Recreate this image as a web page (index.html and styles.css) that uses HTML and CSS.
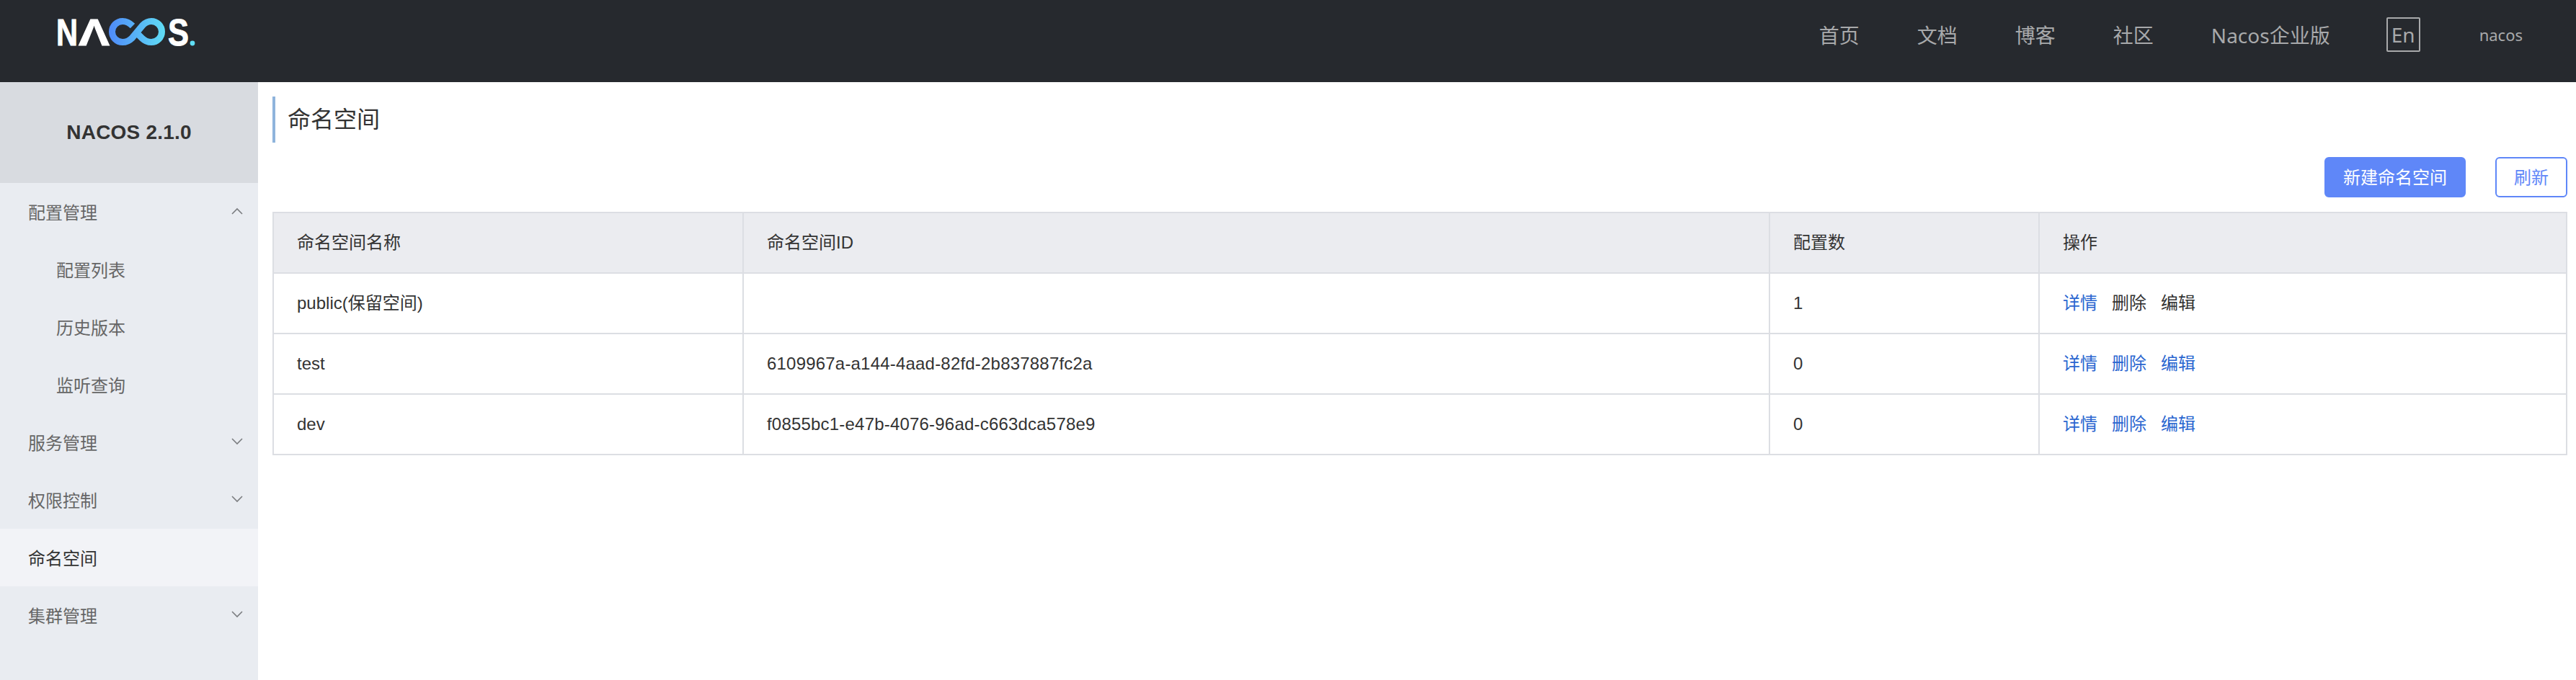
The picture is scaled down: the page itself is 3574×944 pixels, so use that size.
FILE: index.html
```html
<!DOCTYPE html>
<html lang="zh-CN">
<head>
<meta charset="utf-8">
<title>Nacos</title>
<link rel="stylesheet" href="styles.css">
</head>
<body>
<header class="topbar">
  <svg class="logo" viewBox="0 -12 196 62" width="196" height="62" role="img" aria-label="NACOS">
    <defs>
      <linearGradient id="inf" gradientUnits="userSpaceOnUse" x1="74" y1="19" x2="152" y2="19">
        <stop offset="0" stop-color="#4f8bf8"/>
        <stop offset="1" stop-color="#60def5"/>
      </linearGradient>
    </defs>
    <text class="logo-letter" x="0" y="37.5" textLength="30" lengthAdjust="spacingAndGlyphs">N</text>
    <text class="logo-letter" x="31" y="37.5" textLength="43" lengthAdjust="spacingAndGlyphs">Λ</text>
    <path class="logo-inf" stroke="url(#inf)" d="M106 11C102 7 97 4.5 92 4.5A14.5 14.5 0 0 0 92 33.5C97 33.5 102 31 105 28L120 10C123 7 127 4.5 132 4.5A14.5 14.5 0 0 1 132 33.5C127 33.5 122 31 119 28L110 19"/>
    <text class="logo-letter" x="155" y="37.5" textLength="29" lengthAdjust="spacingAndGlyphs">S</text>
    <circle class="logo-dot" cx="189" cy="35" r="3.4"/>
  </svg>
  <nav class="topnav">
    <a class="topnav-link">首页</a>
    <a class="topnav-link">文档</a>
    <a class="topnav-link">博客</a>
    <a class="topnav-link">社区</a>
    <a class="topnav-link">Nacos企业版</a>
  </nav>
  <span class="lang">En</span>
  <span class="user">nacos</span>
</header>
<div class="shell">
  <aside class="sidebar">
    <div class="version">NACOS 2.1.0</div>
    <ul class="menu">
      <li class="menu-item">配置管理<svg class="chev" viewBox="0 0 16 10" width="16" height="10"><polyline points="1,9 8,2 15,9"/></svg></li>
      <li class="menu-item sub">配置列表</li>
      <li class="menu-item sub">历史版本</li>
      <li class="menu-item sub">监听查询</li>
      <li class="menu-item">服务管理<svg class="chev" viewBox="0 0 16 10" width="16" height="10"><polyline points="1,1 8,8 15,1"/></svg></li>
      <li class="menu-item">权限控制<svg class="chev" viewBox="0 0 16 10" width="16" height="10"><polyline points="1,1 8,8 15,1"/></svg></li>
      <li class="menu-item active">命名空间</li>
      <li class="menu-item">集群管理<svg class="chev" viewBox="0 0 16 10" width="16" height="10"><polyline points="1,1 8,8 15,1"/></svg></li>
    </ul>
  </aside>
  <main class="main">
    <h1 class="page-title">命名空间</h1>
    <div class="toolbar">
      <button class="btn btn-primary">新建命名空间</button>
      <button class="btn btn-outline">刷新</button>
    </div>
    <table class="grid">
      <colgroup>
        <col class="col-name"><col class="col-id"><col class="col-count"><col class="col-ops">
      </colgroup>
      <thead>
        <tr><th>命名空间名称</th><th>命名空间ID</th><th>配置数</th><th>操作</th></tr>
      </thead>
      <tbody>
        <tr>
          <td>public(保留空间)</td><td></td><td>1</td>
          <td><div class="ops"><a class="link">详情</a><a class="plain">删除</a><a class="plain">编辑</a></div></td>
        </tr>
        <tr>
          <td>test</td><td class="uuid">6109967a-a144-4aad-82fd-2b837887fc2a</td><td>0</td>
          <td><div class="ops"><a class="link">详情</a><a class="link">删除</a><a class="link">编辑</a></div></td>
        </tr>
        <tr>
          <td>dev</td><td class="uuid">f0855bc1-e47b-4076-96ad-c663dca578e9</td><td>0</td>
          <td><div class="ops"><a class="link">详情</a><a class="link">删除</a><a class="link">编辑</a></div></td>
        </tr>
      </tbody>
    </table>
  </main>
</div>
</body>
</html>
```
FILE: styles.css
```css
* { box-sizing: border-box; }
html, body { margin: 0; padding: 0; height: 100%; overflow: hidden; }
body {
  font-family: "Liberation Sans", "Noto Sans CJK SC", sans-serif;
  font-size: 24px;
  color: #333;
  background: #fff;
  display: flex;
  flex-direction: column;
}

.topbar {
  height: 114px;
  flex: none;
  background: #26292e;
  display: flex;
  align-items: flex-start;
  padding-left: 78px;
  font-family: "Noto Sans", "Noto Sans CJK SC", sans-serif;
  color: #a8a9ab;
}
.logo { margin-top: 13px; flex: none; }
.logo-letter { font-family: "Liberation Sans", sans-serif; font-weight: 700; font-size: 52px; fill: #fff; stroke: #fff; stroke-width: 1; }
.logo-inf { fill: none; stroke-width: 9; stroke-linecap: butt; stroke-linejoin: round; }
.logo-dot { fill: #60def5; }
.topnav { margin-left: auto; display: flex; gap: 80px; height: 48px; margin-top: 24px; align-items: center; font-size: 28px; }
.lang {
  margin-left: 78px;
  margin-top: 24px;
  width: 47px;
  height: 48px;
  border: 2px solid #a8a9ab;
  border-radius: 2px;
  font-size: 28px;
  line-height: 44px;
  text-align: center;
}
.user { margin-left: 82px; margin-right: 74px; margin-top: 24px; height: 48px; line-height: 48px; font-size: 22px; }

.shell { flex: 1; display: flex; min-height: 0; }
.sidebar { width: 358px; flex: none; background: #e9ecf1; }
.version {
  height: 140px;
  background: #d8dbe0;
  display: flex;
  align-items: center;
  justify-content: center;
  font-size: 28px;
  font-weight: 700;
  letter-spacing: 0.2px;
  color: #333;
}
.menu { list-style: none; margin: 0; padding: 0; }
.menu-item {
  height: 80px;
  display: flex;
  align-items: center;
  justify-content: space-between;
  padding: 0 21px 2px 39px;
  color: #666;
  font-family: "Noto Sans CJK SC", sans-serif;
}
.menu-item.sub { padding-left: 78px; }
.menu-item.active { background: #f2f3f7; color: #333; }
.chev { flex: none; }
.chev polyline { fill: none; stroke: #7b7d80; stroke-width: 1.6; }

.main { flex: 1; min-width: 0; padding: 20px 12px 0 20px; }
.page-title {
  margin: 0;
  height: 64px;
  border-left: 4px solid #8fb4dc;
  padding-left: 17px;
  font-size: 32px;
  font-weight: 400;
  line-height: 58px;
  color: #333;
  font-family: "Noto Sans CJK SC", sans-serif;
}
.toolbar { display: flex; justify-content: flex-end; gap: 41px; margin: 20px 0; }
.btn {
  height: 56px;
  padding: 0 24px 2px;
  border-radius: 6px;
  font: inherit;
  font-family: "Noto Sans CJK SC", sans-serif;
  line-height: 1;
}
.btn-primary { background: #5f87f8; border: 2px solid #5f87f8; color: #fff; }
.btn-outline { background: #fff; border: 2px solid #5f87f8; color: #5f87f8; }

.grid { width: 3182px; border-collapse: collapse; table-layout: fixed; }
.col-name { width: 652px; }
.col-id { width: 1424px; }
.col-count { width: 374px; }
.col-ops { width: 732px; }
.grid th, .grid td {
  border: 2px solid #dcdee3;
  padding: 0 32px;
  text-align: left;
  font-weight: 400;
  line-height: 28px;
}
.grid th { height: 84px; background: #ebecf0; }
.grid td { height: 84px; }
.uuid { letter-spacing: 0.2px; }
.ops { display: flex; gap: 20px; }
.link { color: #2a66d0; }
.plain { color: #333; }
```
